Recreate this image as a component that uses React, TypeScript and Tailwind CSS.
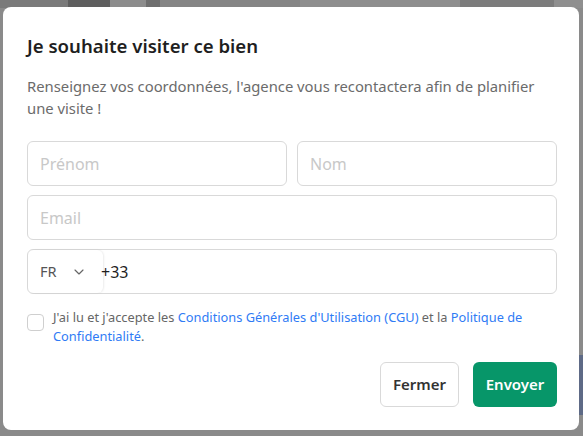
import { ChevronDown } from "lucide-react";

export default function App() {
  return (
    <div className="relative h-[436px] w-[583px] overflow-hidden bg-[#8a8a8a] font-['Noto_Sans',sans-serif]">
      {/* blurred backdrop strip */}
      <div className="absolute left-0 top-0 flex h-[8px] w-full">
        <div className="w-[68px] bg-[#7a7a7a]" />
        <div className="w-[42px] bg-[#5e5e5e]" />
        <div className="w-[36px] bg-[#8c8c8c]" />
        <div className="w-[14px] bg-[#6e6e6e]" />
        <div className="w-[140px] bg-[#858585]" />
        <div className="w-[160px] bg-[#8e8e8e]" />
        <div className="w-[94px] bg-[#7c7c7c]" />
        <div className="flex-1 bg-[#8f8f8f]" />
      </div>
      <div className="absolute right-0 top-[355px] h-[60px] w-[4px] bg-[#5e6a86]" />

      <div className="absolute left-[3px] top-[7px] flex h-[423px] w-[576px] flex-col rounded-[8px] bg-white pl-6 pr-[22px] pt-[27px]">
        <h2 className="text-[18.6px] font-semibold leading-[24px] text-[#1f1f1f]">
          Je souhaite visiter ce bien
        </h2>
        <p className="mt-[17px] text-[14.8px] leading-[22px] text-[#6b6b6b]">
          Renseignez vos coordonnées, l'agence vous recontactera afin de planifier une visite !
        </p>

        <div className="mt-[22px] flex flex-col gap-[9px]">
          <div className="flex gap-[10px]">
            <input
              placeholder="Prénom"
              className="h-[45px] min-w-0 flex-1 rounded-[6px] border border-[#d9d9d9] px-3 text-[16px] text-[#1f1f1f] outline-none placeholder:text-[#c8c8c8]"
            />
            <input
              placeholder="Nom"
              className="h-[45px] min-w-0 flex-1 rounded-[6px] border border-[#d9d9d9] px-3 text-[16px] text-[#1f1f1f] outline-none placeholder:text-[#c8c8c8]"
            />
          </div>
          <input
            placeholder="Email"
            className="h-[45px] w-full rounded-[6px] border border-[#d9d9d9] px-3 text-[16px] text-[#1f1f1f] outline-none placeholder:text-[#c8c8c8]"
          />
          <div className="flex h-[45px] items-center rounded-[6px] border border-[#d9d9d9]">
            <div className="flex h-full w-[75px] items-center gap-[14px] rounded-[6px] px-3 shadow-[1px_0_2px_rgba(0,0,0,0.08)]">
              <span className="text-[14.5px] text-[#555]">FR</span>
              <ChevronDown className="h-4 w-4 text-[#666]" strokeWidth={1.75} />
            </div>
            <span className="ml-[-2px] text-[16px] text-[#1f1f1f]">+33</span>
          </div>
        </div>

        <label className="mt-[14px] flex items-start gap-[9px]">
          <span className="mt-[6px] h-[17px] w-[17px] shrink-0 rounded-[4px] border border-[#cfcfcf]" />
          <span className="text-[12.8px] leading-[19px] text-[#666]">
            J'ai lu et j'accepte les{" "}
            <a className="text-[#2f7bf5]">Conditions Générales d'Utilisation (CGU)</a> et la{" "}
            <a className="text-[#2f7bf5]">Politique de Confidentialité</a>.
          </span>
        </label>

        <div className="mt-auto mb-[23px] flex justify-end gap-[14px]">
          <button className="h-[45px] w-[79px] rounded-[6px] border border-[#d9d9d9] text-[15px] font-semibold text-[#333]">
            Fermer
          </button>
          <button className="h-[45px] w-[84px] rounded-[6px] bg-[#079669] text-[15px] font-semibold text-white">
            Envoyer
          </button>
        </div>
      </div>
    </div>
  );
}
